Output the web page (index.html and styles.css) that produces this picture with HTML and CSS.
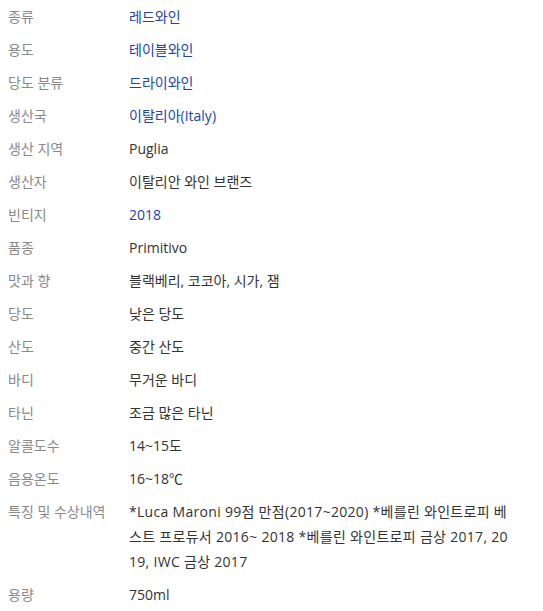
FILE: index.html
```html
<!DOCTYPE html>
<html lang="ko">
<head>
<meta charset="utf-8">
<link rel="stylesheet" href="styles.css">
</head>
<body>
<dl class="spec">
  <div class="row"><dt>종류</dt><dd><a class="link">레드와인</a></dd></div>
  <div class="row"><dt>용도</dt><dd><a class="link">테이블와인</a></dd></div>
  <div class="row"><dt>당도 분류</dt><dd><a class="link">드라이와인</a></dd></div>
  <div class="row"><dt>생산국</dt><dd><a class="link">이탈리아(Italy)</a></dd></div>
  <div class="row"><dt>생산 지역</dt><dd>Puglia</dd></div>
  <div class="row"><dt>생산자</dt><dd>이탈리안 와인 브랜즈</dd></div>
  <div class="row"><dt>빈티지</dt><dd><a class="link">2018</a></dd></div>
  <div class="row"><dt>품종</dt><dd>Primitivo</dd></div>
  <div class="row"><dt>맛과 향</dt><dd>블랙베리, 코코아, 시가, 잼</dd></div>
  <div class="row"><dt>당도</dt><dd>낮은 당도</dd></div>
  <div class="row"><dt>산도</dt><dd>중간 산도</dd></div>
  <div class="row"><dt>바디</dt><dd>무거운 바디</dd></div>
  <div class="row"><dt>타닌</dt><dd>조금 많은 타닌</dd></div>
  <div class="row"><dt>알콜도수</dt><dd>14~15도</dd></div>
  <div class="row"><dt>음용온도</dt><dd>16~18℃</dd></div>
  <div class="row"><dt>특징 및 수상내역</dt><dd class="long">*Luca Maroni 99점 만점(2017~2020) *베를린 와인트로피 베스트 프로듀서 2016~ 2018 *베를린 와인트로피 금상 2017, 2019, IWC 금상 2017</dd></div>
  <div class="row"><dt>용량</dt><dd>750ml</dd></div>
</dl>
</body>
</html>
```
FILE: styles.css
```css
html, body {
  background: #fff;
}
body {
  margin: 0 8px;
  font-family: "Open Sans", "Noto Sans CJK KR", sans-serif;
  font-size: 14px;
  line-height: 25px;
  color: #333;
}
.spec {
  margin: 0;
  padding: 0;
}
.row {
  display: flex;
  padding: 4px 0;
}
.row dt {
  width: 121px;
  flex: none;
  color: #8a8a8a;
  margin: 0;
}
.row dd {
  width: 384px;
  margin: 0;
  word-break: break-all;
}
.row dd.long {
  letter-spacing: 0.3px;
}
.link {
  color: #2143b0;
  text-decoration: none;
}
```
